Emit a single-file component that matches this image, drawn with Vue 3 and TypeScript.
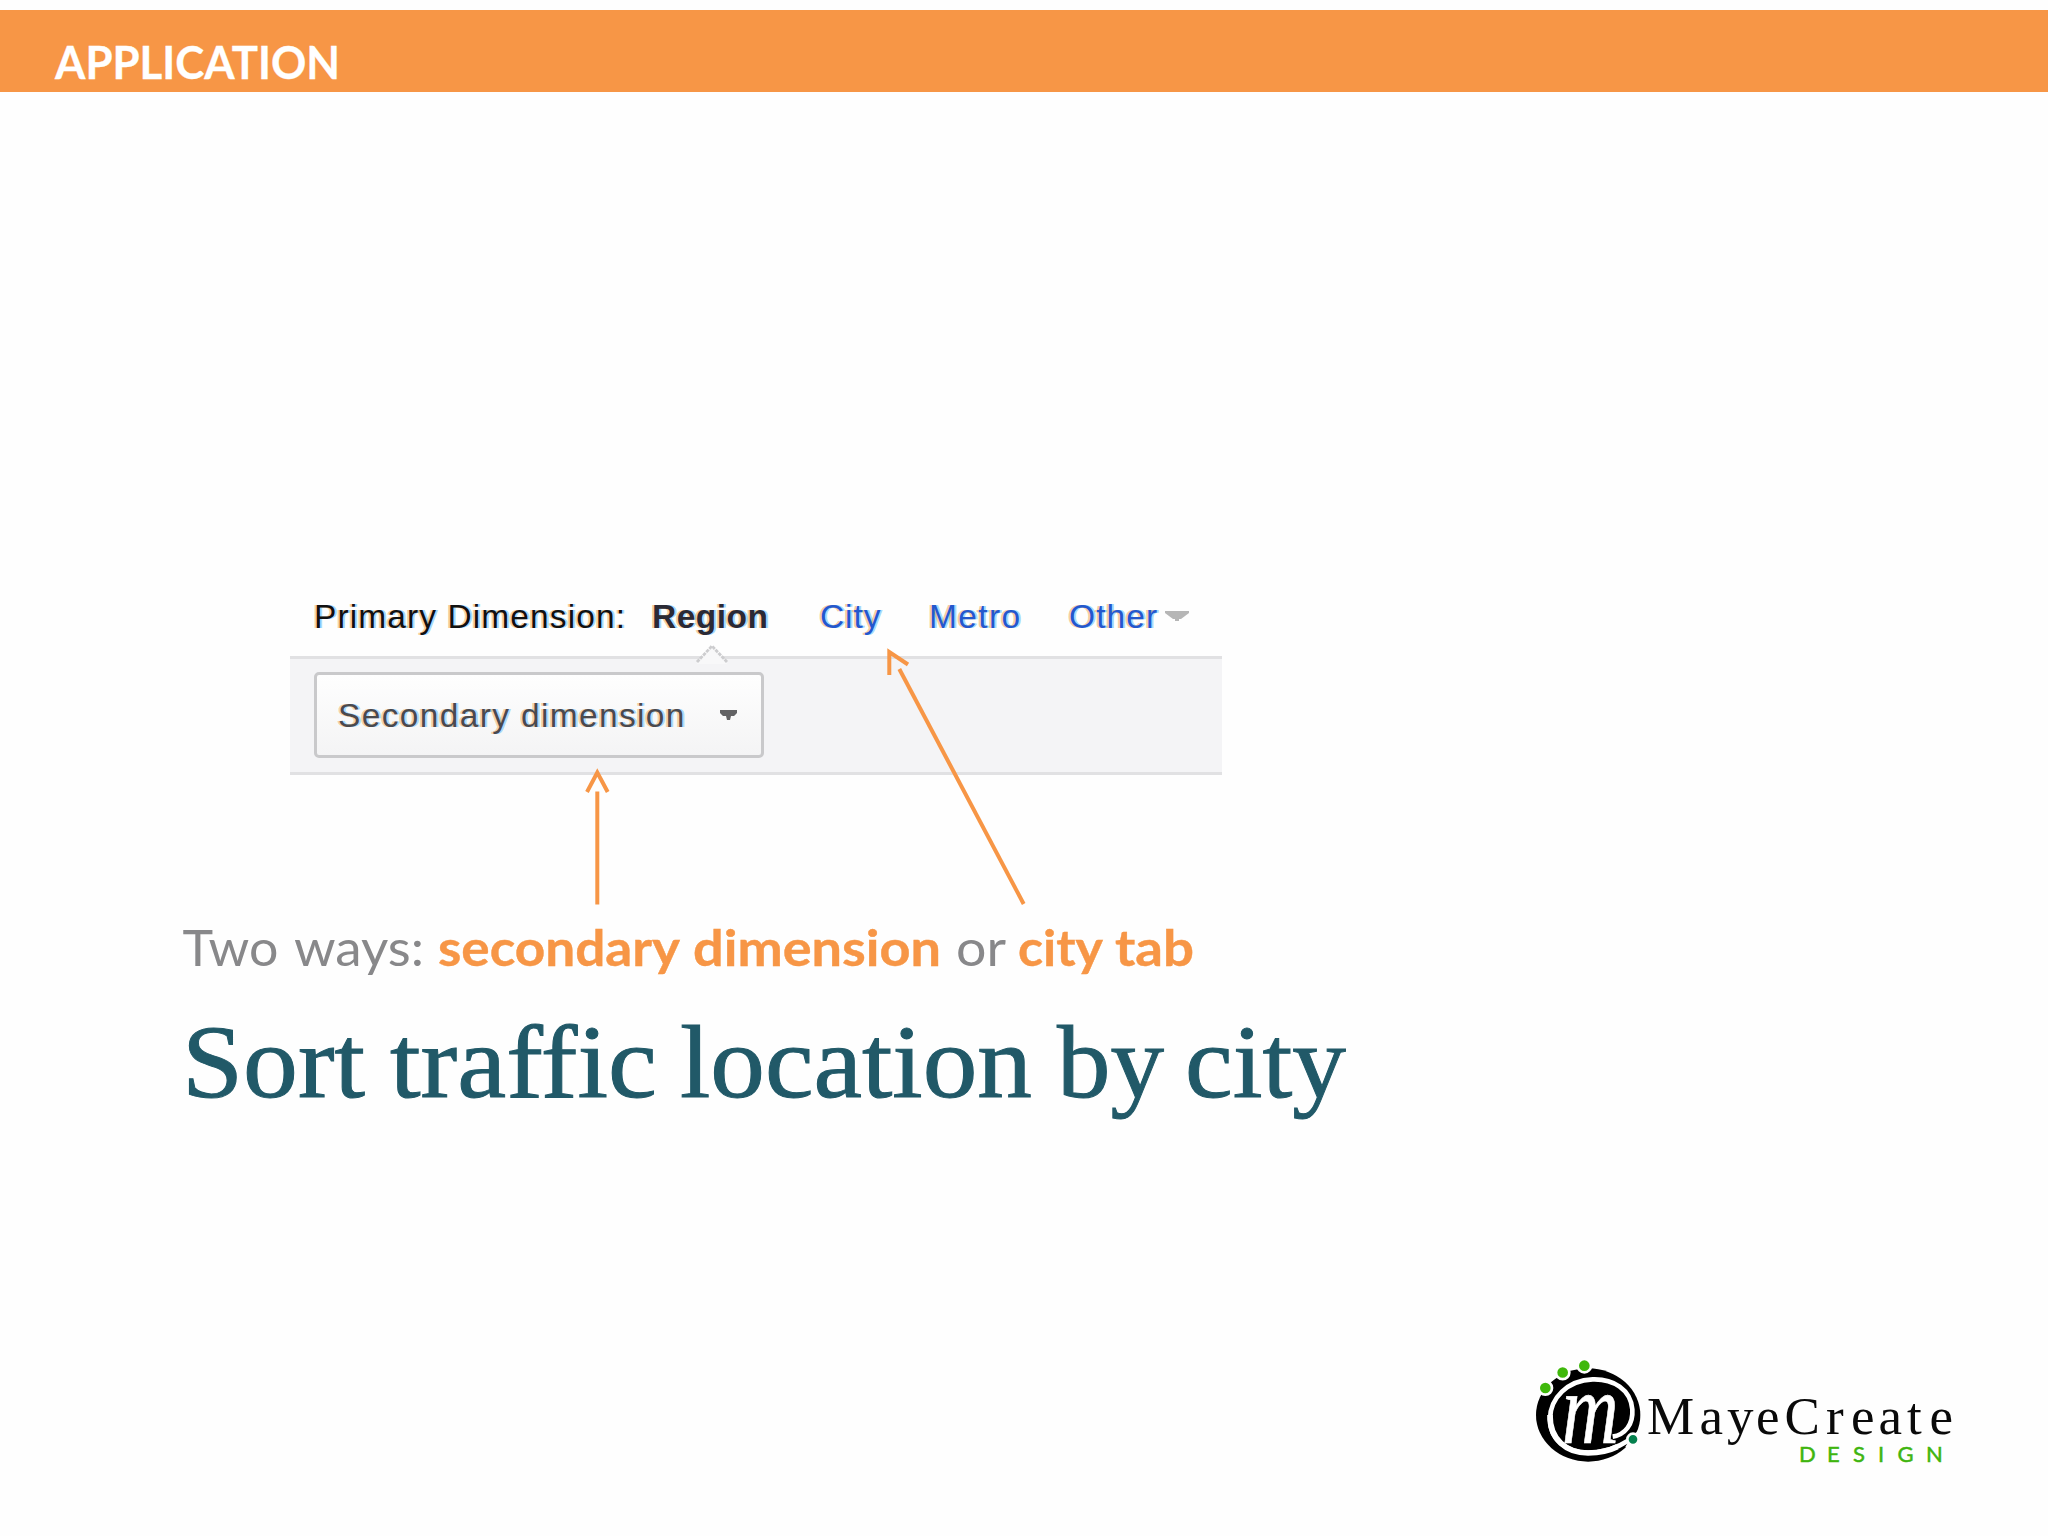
<script setup lang="ts">
interface Run {
  text: string
  x: number
  width: number
  strong?: boolean
}

const captionRuns: Run[] = [
  { text: 'Two', x: -0.5, width: 96 },
  { text: 'ways:', x: 111, width: 130 },
  { text: 'secondary', x: 255, width: 242, strong: true },
  { text: 'dimension', x: 510, width: 248, strong: true },
  { text: 'or', x: 773, width: 50 },
  { text: 'city', x: 835, width: 85, strong: true },
  { text: 'tab', x: 932, width: 79, strong: true },
]

const titleRuns: Run[] = [
  { text: 'Sort', x: 0, width: 183 },
  { text: 'traffic', x: 208, width: 267 },
  { text: 'location', x: 498, width: 352 },
  { text: 'by', x: 875, width: 107 },
  { text: 'city', x: 1003, width: 161 },
]

const tabs = [
  { label: 'City', cls: 'city' },
  { label: 'Metro', cls: 'metro' },
  { label: 'Other', cls: 'other' },
]

const brandX = [7, 59.5, 87, 116, 144.5, 186, 211, 238.5, 267, 289.5]
const designX = [159, 187, 213, 238, 257.5, 286]
</script>

<template>
  <main class="slide">
    <header class="banner">
      <svg class="banner-text" width="400" height="82" viewBox="0 0 400 82">
        <text x="55" y="69" textLength="285" lengthAdjust="spacingAndGlyphs">APPLICATION</text>
      </svg>
    </header>

    <section class="widget">
      <nav class="dimensions">
        <span class="label">Primary Dimension:</span>
        <b class="region">Region</b>
        <a v-for="t in tabs" :key="t.label" :class="t.cls">{{ t.label }}</a>
        <svg class="more" width="24" height="11" viewBox="0 0 24 11"><path d="M0 0H24V2L20 5L16 8H14V10H10V8H8L4 5L0 2Z" fill="#b6b6b6" /></svg>
      </nav>
      <div class="toolbar">
        <svg class="notch" width="34" height="20" viewBox="0 0 34 20">
          <path d="M2 18L17 2L32 18V20H2Z" fill="#f8f8f9" />
          <path d="M2 18L17 2L32 18" fill="none" stroke="#cdcdcf" stroke-width="2.800" stroke-dasharray="3.5 1" />
        </svg>
        <button class="secondary" type="button">
          <span>Secondary dimension</span>
          <svg width="17" height="11" viewBox="0 0 17 11"><path d="M0 0H17V3L14 6H11L10 10H7L6 6H3L0 3Z" fill="#626264" /></svg>
        </button>
      </div>
    </section>

    <svg class="caption" width="1100" height="70" viewBox="0 0 1100 70">
      <text
        v-for="r in captionRuns"
        :key="r.text"
        :x="r.x"
        y="50"
        :class="{ strong: r.strong }"
        :textLength="r.width"
        lengthAdjust="spacingAndGlyphs"
      >{{ r.text }}</text>
    </svg>

    <h1 class="title">
      <svg width="1200" height="120" viewBox="0 0 1200 120">
        <text
          v-for="r in titleRuns"
          :key="r.text"
          :x="r.x"
          y="95"
          :textLength="r.width"
          lengthAdjust="spacingAndGlyphs"
        >{{ r.text }}</text>
      </svg>
    </h1>

    <footer class="brand">
      <svg width="148" height="150" viewBox="0 0 444 450" class="mark">
        <ellipse cx="264.500" cy="225" rx="156.500" ry="140" fill="#000" />
        <path
          d="M338 290C376 284 400 252 397 208C392 148 340 116 278 118C202 121 151 174 150 236C149 299 200 337 264 338C312 338 350 325 388 300"
          fill="none" stroke="#fff" stroke-width="14"
        />
        <path d="M150 225C149 299 200 339 264 339C302 338 330 331 352 320" fill="none" stroke="#fff" stroke-width="17" />
        <path d="M384 308L376 320L410 345L440 290L421 262L410 276Z" fill="#fefefe" />
        <text class="m" x="186" y="309" textLength="170" lengthAdjust="spacingAndGlyphs">m</text>
        <g fill="#3fb80b" stroke="#fefefe" stroke-width="8">
          <circle cx="136" cy="144" r="20" />
          <circle cx="188" cy="97.500" r="20" />
          <circle cx="253" cy="77" r="20" />
        </g>
        <circle cx="399" cy="298" r="17" fill="#04804d" stroke="#fefefe" stroke-width="8" />
      </svg>
      <svg width="340" height="150" viewBox="0 -20 340 150" class="wordmark">
        <text class="maye" :x="brandX.join(' ')" y="74">MayeCreate</text>
        <text class="design" :x="designX.join(' ')" y="101.500">DESIGN</text>
      </svg>
    </footer>

    <svg class="arrows" width="2048" height="1536" viewBox="0 0 2048 1536">
      <g fill="none" stroke="#f79646" stroke-width="4">
        <path d="M597.300 791.500V904.500" />
        <path d="M587 792L597.300 772.500L607.700 792" />
        <path d="M899.300 669L1023.700 904" />
        <path d="M889.300 675V652L908 664.500" />
      </g>
    </svg>
  </main>
</template>

<style>
body {
  background: #fefefe;
}
</style>

<style scoped>
.slide {
  position: relative;
  width: 2048px;
  height: 1536px;
  overflow: hidden;
  box-sizing: border-box;
  padding-top: 10px;
  display: flex;
  flex-direction: column;
  background: #fefefe;
}
.banner {
  height: 82px;
  flex: none;
  background: #f79646;
}
.banner-text {
  display: block;
  font: bold 45px Lato, sans-serif;
  fill: #fff;
  stroke: #fff;
  stroke-width: 0.3;
}
.widget {
  margin: 500px 0 0 290px;
  width: 932px;
  flex: none;
  font: 33.5px/38px "Liberation Sans", sans-serif;
}
.dimensions {
  height: 64px;
  display: flex;
  align-items: flex-start;
  padding: 6px 0 0 24px;
  box-sizing: border-box;
  white-space: nowrap;
  text-shadow: -2px 0 rgba(240, 160, 70, 0.5), 2px 0 rgba(80, 180, 255, 0.5);
}
.label { width: 338px; letter-spacing: 1.1px; color: #111; }
.region { width: 168px; letter-spacing: 0.5px; color: #2a2a35; }
.dimensions a { color: #2458cc; }
.city { width: 109px; letter-spacing: 0.9px; }
.metro { width: 140px; letter-spacing: 1.4px; }
.other { width: 96px; letter-spacing: 1.1px; }
.more { margin-top: 13px; flex: none; }
.toolbar {
  position: relative;
  height: 119px;
  box-sizing: border-box;
  border-top: 3px solid #e1e1e3;
  border-bottom: 3px solid #e1e1e3;
  background: #f4f4f6;
  padding: 13px 0 0 24px;
}
.notch {
  position: absolute;
  left: 405px;
  top: -15px;
}
.secondary {
  width: 450px;
  height: 86px;
  box-sizing: border-box;
  border: 3px solid #c9c9cb;
  border-radius: 5px;
  background: linear-gradient(#fefefe, #f4f4f5);
  padding: 1px 24px 0 21px;
  display: flex;
  align-items: center;
  justify-content: space-between;
  font: inherit;
  letter-spacing: 1.35px;
  color: #4a4a4e;
  text-shadow: -2px 0 rgba(240, 160, 70, 0.45), 2px 0 rgba(80, 180, 255, 0.45);
}
.caption {
  display: block;
  flex: none;
  overflow: visible;
  margin: 141px 0 0 183px;
  font: 50px Lato, sans-serif;
  fill: #88888a;
}
.caption .strong {
  font-weight: bold;
  fill: #f79646;
  stroke: #f79646;
  stroke-width: 0.4;
}
.title {
  margin: 16px 0 0 182px;
  height: 120px;
  font: 400 104.5px/120px "Liberation Serif", serif;
  font-variant-ligatures: none;
}
.title svg {
  display: block;
  overflow: visible;
  fill: #215968;
  stroke: #215968;
  stroke-width: 1;
}
.brand {
  margin: auto 60px 46px 1500px;
  display: flex;
  width: 488px;
  flex: none;
}
.mark,
.wordmark {
  flex: none;
  overflow: visible;
}
.wordmark {
  margin-left: -8px;
}
.m {
  font: italic 305px "Liberation Serif", serif;
  fill: #fff;
  stroke: #fff;
  stroke-width: 2;
}
.maye {
  font: 53px "Liberation Serif", serif;
  fill: #0a0a0a;
}
.design {
  font: 22px Lato, sans-serif;
  fill: #3fb50f;
  stroke: #3fb50f;
  stroke-width: 0.5;
}
.arrows {
  position: absolute;
  left: 0;
  top: 0;
  pointer-events: none;
}
</style>
